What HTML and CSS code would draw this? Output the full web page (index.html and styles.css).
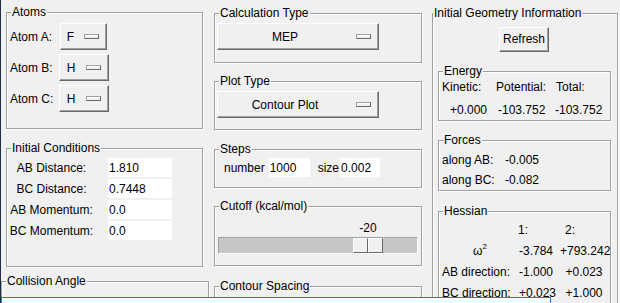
FILE: index.html
```html
<!DOCTYPE html>
<html lang="en">
<head>
   <meta charset="UTF-8">
   <meta name="viewport" content="width=device-width">
   <title>LEPS Surface</title>
   <link rel="stylesheet" href="styles.css">
</head>
<body>
<div class="app">

   <div class="col col-left">
       <div class="group atoms">
           <div class="group-title">Atoms</div>
           <div class="atom-grid">
               <span>Atom A:</span>
               <div class="menubutton mb-a"><span class="mb-text">F</span><span class="mb-ind"></span></div>
               <span>Atom B:</span>
               <div class="menubutton mb-b"><span class="mb-text">H</span><span class="mb-ind"></span></div>
               <span>Atom C:</span>
               <div class="menubutton mb-b"><span class="mb-text">H</span><span class="mb-ind"></span></div>
           </div>
       </div>

       <div class="group conditions">
           <div class="group-title">Initial Conditions</div>
           <div class="form-grid">
               <span class="form-label">AB Distance:</span>
               <input class="entry" type="text" value="1.810">
               <span class="form-label">BC Distance:</span>
               <input class="entry" type="text" value="0.7448">
               <span class="form-label">AB Momentum:</span>
               <input class="entry" type="text" value="0.0">
               <span class="form-label">BC Momentum:</span>
               <input class="entry" type="text" value="0.0">
           </div>
       </div>

       <div class="group collision">
           <div class="group-title">Collision Angle</div>
       </div>
   </div>

   <div class="col col-mid">
       <div class="group calc">
           <div class="group-title">Calculation Type</div>
           <div class="menubutton mb-wide"><span class="mb-text">MEP</span><span class="mb-ind"></span></div>
       </div>

       <div class="group plot">
           <div class="group-title">Plot Type</div>
           <div class="menubutton mb-wide"><span class="mb-text">Contour Plot</span><span class="mb-ind"></span></div>
       </div>

       <div class="group steps">
           <div class="group-title">Steps</div>
           <div class="steps-row">
               <span class="steps-label">number</span>
               <input class="entry entry-number" type="text" value="1000">
               <span class="steps-label steps-size">size</span>
               <input class="entry entry-size" type="text" value="0.002">
           </div>
       </div>

       <div class="group cutoff">
           <div class="group-title">Cutoff (kcal/mol)</div>
           <div class="scale-value">
               <span style="width: 134px"></span>
               <span class="scale-label">-20</span>
           </div>
           <div class="trough">
               <span style="width: 134px"></span>
               <span class="slider"><span class="slider-half"></span><span class="slider-half"></span></span>
           </div>
       </div>

       <div class="group contour">
           <div class="group-title">Contour Spacing</div>
       </div>
   </div>

   <div class="col col-right">
       <div class="group geom">
           <div class="group-title geom-title">Initial Geometry Information</div>
           <div class="button refresh">Refresh</div>

           <div class="group inner energy">
               <div class="group-title">Energy</div>
               <div class="energy-grid">
                   <span>Kinetic:</span>
                   <span>Potential:</span>
                   <span class="total">Total:</span>
                   <span class="kin-val">+0.000</span>
                   <span class="pot-val">-103.752</span>
                   <span>-103.752</span>
               </div>
           </div>

           <div class="group inner forces">
               <div class="group-title">Forces</div>
               <div class="forces-grid">
                   <span>along AB:</span><span>-0.005</span>
                   <span>along BC:</span><span>-0.082</span>
               </div>
           </div>

           <div class="group inner hessian">
               <div class="group-title">Hessian</div>
               <div class="hessian-grid">
                   <span></span><span>1:</span><span class="head-2">2:</span>
                   <span class="omega">ω<sup>2</sup></span><span class="h1">-3.784</span><span class="h2">+793.242</span>
                   <span>AB direction:</span><span class="h1">-1.000</span><span class="h2">+0.023</span>
                   <span>BC direction:</span><span class="h1">+0.023</span><span class="h2">+1.000</span>
               </div>
           </div>
       </div>
   </div>

   <div class="overlap"></div>
</div>
</body>
</html>
```

FILE: styles.css
```css
body {
    margin: 0;
    background-color: #f0f0f0;
    color: #000;
    font-family: "Liberation Sans", Arial, sans-serif;
    font-size: 12px;
}
.app {
    position: relative;
    display: flex;
    align-items: flex-start;
    width: 620px;
    height: 303px;
    box-sizing: border-box;
    border-left: 1px solid #1f2f40;
    overflow: hidden;
}
.col { flex: none; }
.col-left { margin-left: 5px; width: 197px; padding-top: 12px; }
.col-mid { margin-left: 11px; width: 208px; padding-top: 13px; }
.col-right { margin-left: 10px; width: 186px; padding-top: 13px; }

/* labelframe with groove border */
.group {
    box-sizing: border-box;
    border: 1px solid #a0a0a0;
    box-shadow: 1px 1px 0 #fff, inset 1px 1px 0 #fff;
}
.group-title {
    width: max-content;
    margin: -8px 0 0 4px;
    padding: 0 1px;
    line-height: 14px;
    background-color: #f0f0f0;
}
.geom-title { margin-left: 0; }

/* raised widgets */
.menubutton, .button {
    box-sizing: border-box;
    height: 27px;
    border: 1px solid;
    border-color: #fff #696969 #696969 #fff;
    box-shadow: inset -1px -1px 0 #a0a0a0;
    background-color: #f0f0f0;
}
.menubutton { display: flex; align-items: center; }
.mb-text { flex: 1; text-align: center; }
.mb-ind {
    box-sizing: border-box;
    width: 15px;
    height: 5px;
    margin: 0 7px 0 4px;
    border: 1px solid;
    border-color: #a0a0a0 #696969 #696969 #a0a0a0;
    box-shadow: inset 1px 1px 0 #fff;
}
.mb-a { width: 47px; margin-left: 1px; }
.mb-b { width: 50px; }
.mb-wide { width: 162px; margin: 3px 0 0 2px; }

.entry {
    box-sizing: border-box;
    height: 19px;
    padding: 0;
    border: 1px solid #fff;
    background-color: #fff;
    font: inherit;
    color: #000;
    outline: none;
}

/* left column */
.atoms { height: 117px; }
.atom-grid {
    display: grid;
    grid-template-columns: 49px auto;
    row-gap: 4px;
    align-items: center;
    justify-items: start;
    margin-top: 4px;
    padding-left: 3px;
}
.conditions { height: 119px; margin-top: 19px; }
.form-grid {
    display: grid;
    grid-template-columns: 89px 64px;
    column-gap: 12px;
    row-gap: 2px;
    align-items: center;
    margin-top: 3px;
}
.form-label { text-align: center; }
.form-grid .entry { width: 64px; }
.collision { width: 208px; height: 40px; margin: 14px 0 0 -5px; }

/* middle column */
.calc { height: 50px; }
.plot { height: 49px; margin-top: 18px; }
.steps { height: 39px; margin-top: 19px; }
.steps-row {
    display: flex;
    align-items: center;
    margin-top: 2px;
    padding-left: 9px;
}
.steps-label { margin-right: 4px; }
.steps-size { margin: 0 1px 0 8px; }
.entry-number { width: 41px; }
.entry-size { width: 40px; }

.cutoff { height: 60px; margin-top: 18px; }
.scale-value {
    display: flex;
    margin-top: 8px;
    padding-left: 4px;
    line-height: 14px;
}
.scale-label { width: 30px; text-align: center; }
.trough {
    display: flex;
    box-sizing: border-box;
    width: 200px;
    height: 17px;
    margin: 2px 0 0 3px;
    border: 1px solid;
    border-color: #a0a0a0 #fff #fff #a0a0a0;
    background-color: #c6c6c6;
}
.slider { display: flex; }
.slider-half {
    box-sizing: border-box;
    width: 15px;
    height: 15px;
    border: 1px solid;
    border-color: #fff #696969 #696969 #fff;
    background-color: #f0f0f0;
}
.contour { height: 40px; margin-top: 20px; }

/* right column */
.geom { height: 320px; }
.refresh {
    width: 50px;
    height: 25px;
    margin: 7px 0 0 66px;
    line-height: 23px;
    text-align: center;
}
.inner { width: 173px; margin-left: 5px; }
.energy { height: 50px; margin-top: 19px; }
.energy-grid {
    display: grid;
    grid-template-columns: 54px 59px auto;
    row-gap: 5px;
    padding-left: 3px;
    line-height: 18px;
}
.total { padding-left: 1px; }
.kin-val { padding-left: 8px; }
.pot-val { padding-left: 2px; }

.forces { height: 51px; margin-top: 19px; }
.forces-grid {
    display: grid;
    grid-template-columns: 63px auto;
    row-gap: 2px;
    margin-top: 4px;
    padding-left: 3px;
    line-height: 18px;
}

.hessian { height: 100px; margin-top: 20px; }
.hessian-grid {
    display: grid;
    grid-template-columns: 76px 42px 48px;
    row-gap: 1px;
    margin-top: 2px;
    padding-left: 3px;
    line-height: 20px;
}
.head-2 { padding-left: 5px; }
.omega { text-align: center; }
.omega sup { font-size: 8px; vertical-align: 6px; line-height: 0; }
.h1 { padding-left: 1px; }
.h2 { text-align: center; }

/* window lying over the bottom edge */
.overlap {
    position: absolute;
    left: 0;
    top: 297px;
    width: 550px;
    height: 12px;
    box-sizing: border-box;
    border: 1px solid #2b79c9;
    background-color: #fff;
}
```
